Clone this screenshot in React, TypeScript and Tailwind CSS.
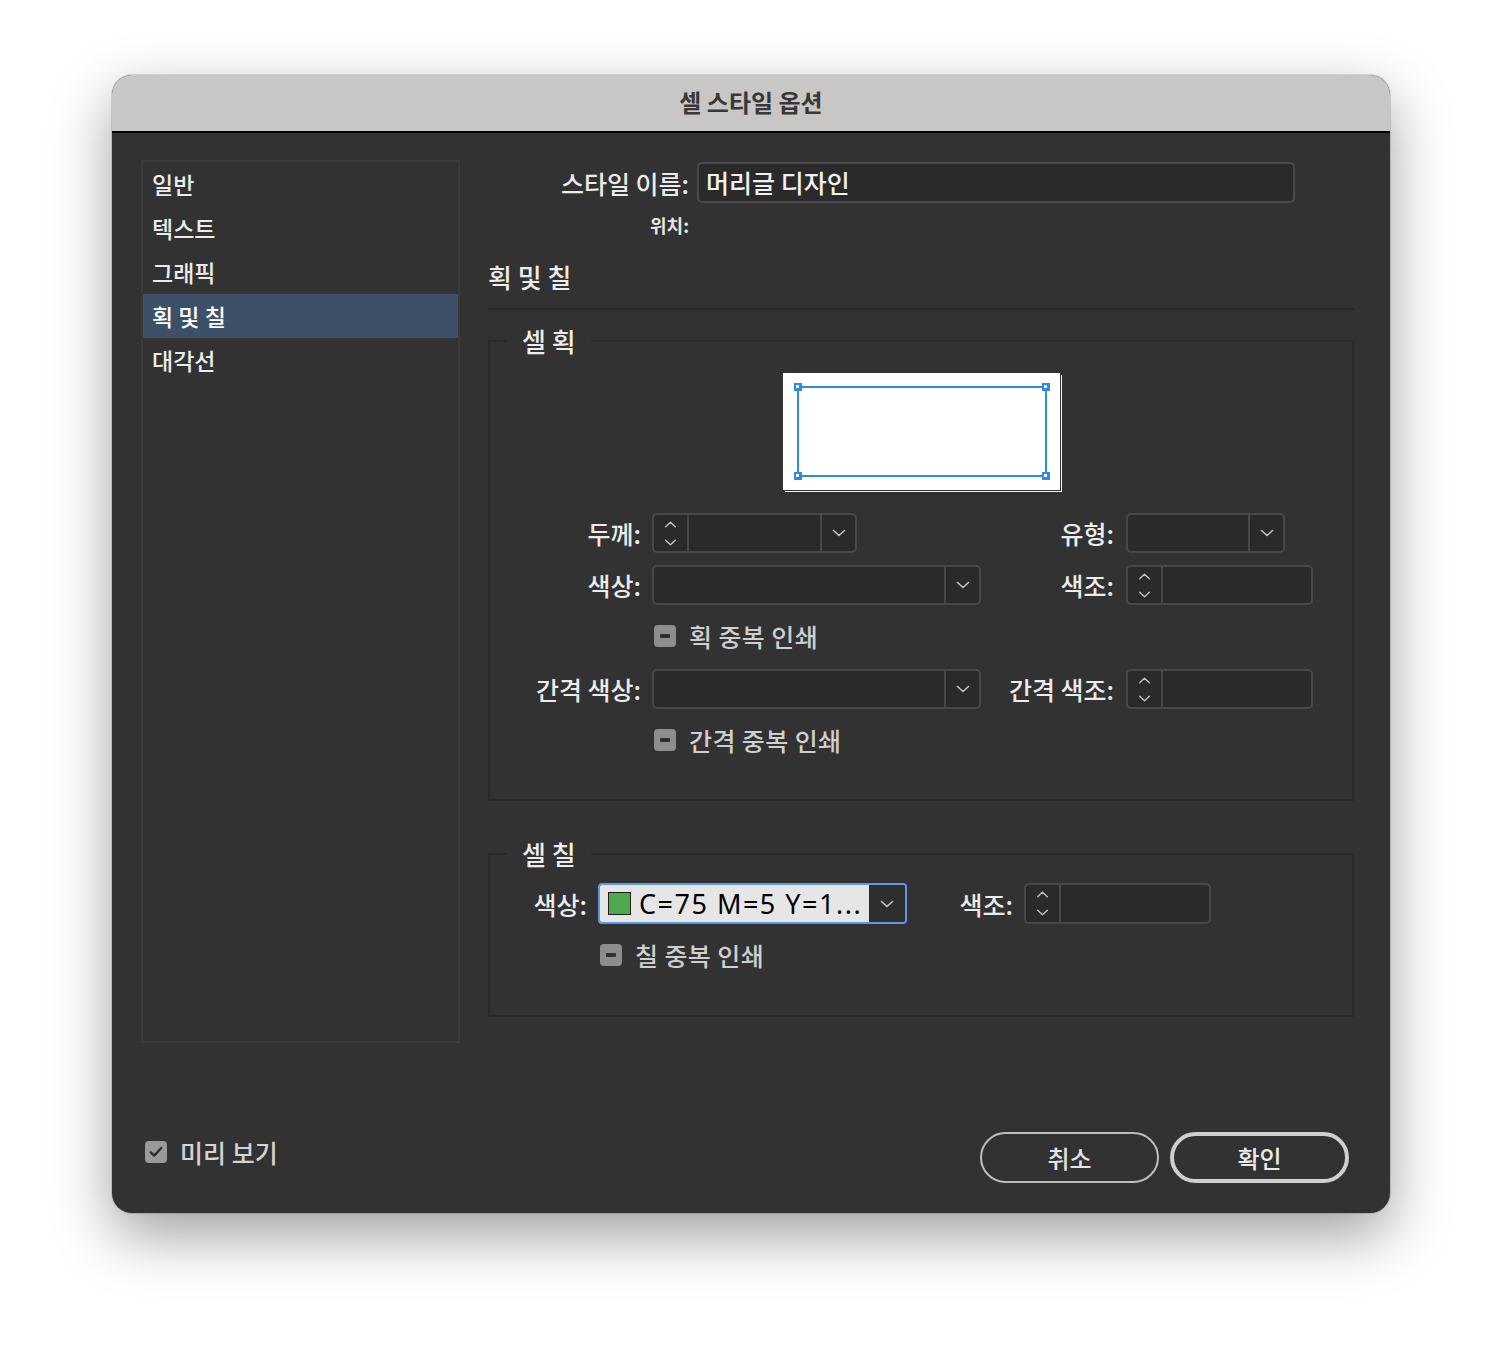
import type { ReactNode } from "react";

const KR = "font-['Noto_Sans_CJK_KR','Noto_Sans',sans-serif]";

function ChevronDown({ w = 14, h = 8 }: { w?: number; h?: number }) {
  return (
    <svg width={w} height={h} viewBox="0 0 14 8" fill="none" aria-hidden>
      <path d="M1.5 1.5 7 6.5l5.5-5" stroke="#c4c4c4" strokeWidth="1.6" strokeLinecap="round" strokeLinejoin="round" />
    </svg>
  );
}

function ChevronUp() {
  return (
    <svg width="13" height="7" viewBox="0 0 14 8" fill="none" aria-hidden>
      <path d="M1.5 6.5 7 1.5l5.5 5" stroke="#c4c4c4" strokeWidth="1.6" strokeLinecap="round" strokeLinejoin="round" />
    </svg>
  );
}

function Spin() {
  return (
    <div className="flex w-[35px] shrink-0 flex-col items-center justify-center gap-[11px] border-r-2 border-[#484848]">
      <ChevronUp />
      <ChevronDown w={13} h={7} />
    </div>
  );
}

function Drop() {
  return (
    <div className="flex w-[35px] shrink-0 items-center justify-center border-l-2 border-[#484848]">
      <ChevronDown />
    </div>
  );
}

/* Dark input: optional stepper on the left, optional dropdown on the right. */
function Field({ className, spin, drop }: { className: string; spin?: boolean; drop?: boolean }) {
  return (
    <div className={`flex overflow-hidden rounded-[5px] border-2 border-[#484848] bg-[#2a2a2a] ${className}`}>
      {spin && <Spin />}
      <div className="flex-1" />
      {drop && <Drop />}
    </div>
  );
}

function Mixed({ label, pad }: { label: string; pad: string }) {
  return (
    <div className={`flex h-[24px] items-center gap-[13px] ${pad}`}>
      <span className="grid size-[22px] shrink-0 place-items-center rounded-[4px] bg-[#8d8d8d]">
        <span className="h-[4px] w-[10px] rounded-[1px] bg-[#2f2f2f]" />
      </span>
      <span className="whitespace-nowrap text-[25px] font-medium leading-[28px] tracking-[0.4px] text-[#cfcfcf]">{label}</span>
    </div>
  );
}

function Label({ className, children }: { className: string; children: ReactNode }) {
  return (
    <span className={`shrink-0 whitespace-nowrap text-right text-[25px] font-medium leading-[30px] text-[#ececec] ${className}`}>
      {children}
    </span>
  );
}

function Group({ title, className, children }: { title: string; className: string; children: ReactNode }) {
  return (
    <fieldset className={`m-0 min-w-0 border-2 border-[#2a2a2a] p-0 ${className}`}>
      <legend className="ml-[17px] px-[15px] text-[26px] font-medium leading-[30px] text-[#ededed]">{title}</legend>
      {children}
    </fieldset>
  );
}

const NAV = ["일반", "텍스트", "그래픽", "획 및 칠", "대각선"];

export default function App() {
  return (
    <div className={`h-[1362px] w-[1502px] bg-white pl-[112px] pt-[75px] ${KR}`}>
      <div className="flex h-[1138px] w-[1278px] flex-col overflow-hidden rounded-[20px] bg-[#323232] shadow-[0_0_0_1px_rgba(0,0,0,0.12),0_22px_60px_rgba(0,0,0,0.38)]">
        <div className="flex h-[58px] shrink-0 items-center justify-center border-b-2 border-black bg-[#c8c7c5] pb-[3px]">
          <span className="text-[24px] font-bold text-[#383838]">셀 스타일 옵션</span>
        </div>

        <div className="flex flex-1 flex-col pl-[29px] pr-[36px] pt-[27px]">
          <div className="flex gap-[28px]">
            <nav className="h-[883px] w-[319px] shrink-0 border-2 border-[#3b3b3b]">
              {NAV.map((n) => (
                <div
                  key={n}
                  className={`flex h-[44px] items-center pl-[9px] text-[23px] font-medium ${
                    n === "획 및 칠" ? "bg-[#3d5068] text-white" : "text-[#ececec]"
                  }`}
                >
                  {n}
                </div>
              ))}
            </nav>

            <div className="w-[866px] pt-[2px]">
              <div className="flex h-[41px] items-center">
                <Label className="w-[201px]">스타일 이름:</Label>
                <div className="ml-[8px] flex h-[41px] w-[598px] items-center rounded-[5px] border-2 border-[#4a4a4a] bg-[#2a2a2a] pl-[7px] text-[25px] font-medium text-[#f2f2f2]">
                  머리글 디자인
                </div>
              </div>
              <div className="mt-[10px] flex h-[24px]">
                <span className="w-[201px] text-right text-[18px] font-bold leading-[24px] text-[#e6e6e6]">위치:</span>
              </div>
              <div className="mt-[26px] h-[28px] text-[26px] font-medium leading-[28px] text-[#ededed]">획 및 칠</div>
              <div className="mt-[17px] h-[2px] bg-[#282828]" />

              <Group title="셀 획" className="mt-[16px] pb-[47px]">
                <div className="mx-auto mt-[17px] h-[117px] w-[277px] bg-white shadow-[1px_1px_0_#323232,2px_2px_0_#f4f4f4]">
                  <svg width="277" height="117" viewBox="0 0 277 117" aria-hidden>
                    <rect x="15" y="14" width="248" height="89" fill="none" stroke="#2f8ae6" strokeWidth="2" />
                    {[
                      [15, 14],
                      [263, 14],
                      [15, 103],
                      [263, 103],
                    ].map(([x, y]) => (
                      <g key={`${x}-${y}`}>
                        <rect x={x - 4} y={y - 4} width="8" height="8" fill="#2f8ae6" />
                        <rect x={x - 2} y={y - 2} width="3" height="3" fill="#fff" />
                      </g>
                    ))}
                  </svg>
                </div>

                <div className="mt-[23px] flex h-[40px] items-center">
                  <Label className="w-[151px]">두께:</Label>
                  <div className="ml-[11px] w-[329px]">
                    <Field className="h-[40px] w-[205px]" spin drop />
                  </div>
                  <Label className="w-[133px]">유형:</Label>
                  <Field className="ml-[12px] h-[40px] w-[159px]" drop />
                </div>
                <div className="mt-[12px] flex h-[40px] items-center">
                  <Label className="w-[151px]">색상:</Label>
                  <Field className="ml-[11px] h-[40px] w-[329px]" drop />
                  <Label className="w-[133px]">색조:</Label>
                  <Field className="ml-[12px] h-[40px] w-[187px]" spin />
                </div>
                <div className="mt-[19px]">
                  <Mixed label="획 중복 인쇄" pad="pl-[164px]" />
                </div>
                <div className="mt-[21px] flex h-[40px] items-center">
                  <Label className="w-[151px]">간격 색상:</Label>
                  <Field className="ml-[11px] h-[40px] w-[329px]" drop />
                  <Label className="w-[133px]">간격 색조:</Label>
                  <Field className="ml-[12px] h-[40px] w-[187px]" spin />
                </div>
                <div className="mt-[19px]">
                  <Mixed label="간격 중복 인쇄" pad="pl-[164px]" />
                </div>
              </Group>

              <Group title="셀 칠" className="mt-[38px] pb-[48px]">
                <div className="mt-[14px] flex h-[41px] items-center">
                  <Label className="w-[97px]">색상:</Label>
                  <div className="ml-[11px] flex h-[41px] w-[309px] overflow-hidden rounded-[4px] border-2 border-[#5b9be6]">
                    <div className="flex min-w-0 flex-1 items-center gap-[8px] bg-[#e6e6e6] pl-[8px]">
                      <span className="size-[23px] shrink-0 border-[1.5px] border-[#1e1e1e] bg-[#4fa84b]" />
                      <span className="whitespace-nowrap font-['Noto_Sans',sans-serif] text-[27px] leading-[30px] tracking-[1.5px] text-black">
                        C=75 M=5 Y=1...
                      </span>
                    </div>
                    <div className="flex w-[36px] shrink-0 items-center justify-center bg-[#2e2e2e]">
                      <ChevronDown />
                    </div>
                  </div>
                  <Label className="w-[106px]">색조:</Label>
                  <Field className="ml-[11px] h-[41px] w-[187px]" spin />
                </div>
                <div className="mt-[19px]">
                  <Mixed label="칠 중복 인쇄" pad="pl-[110px]" />
                </div>
              </Group>
            </div>
          </div>

          <div className="mt-[89px] flex items-start justify-between">
            <div className="ml-[4px] mt-[8px] flex h-[24px] items-center gap-[13px]">
              <span className="grid size-[22px] place-items-center rounded-[4px] bg-[#9a9a9a]">
                <svg width="14" height="12" viewBox="0 0 14 12" fill="none" aria-hidden>
                  <path d="M1.8 6.3 5.2 9.6 12.2 2" stroke="#2e2e2e" strokeWidth="2.4" strokeLinecap="round" strokeLinejoin="round" />
                </svg>
              </span>
              <span className="text-[25px] font-medium leading-[28px] text-[#d4d4d4]">미리 보기</span>
            </div>
            <div className="mr-[5px] flex gap-[11px]">
              <button
                type="button"
                className="h-[51px] w-[179px] rounded-full border-2 border-[#bdbdbd] text-[24px] font-medium text-[#e4e4e4]"
              >
                취소
              </button>
              <button
                type="button"
                className="h-[51px] w-[179px] rounded-full border-[4px] border-[#cfcfcf] text-[24px] font-medium text-[#ececec]"
              >
                확인
              </button>
            </div>
          </div>
        </div>
      </div>
    </div>
  );
}
